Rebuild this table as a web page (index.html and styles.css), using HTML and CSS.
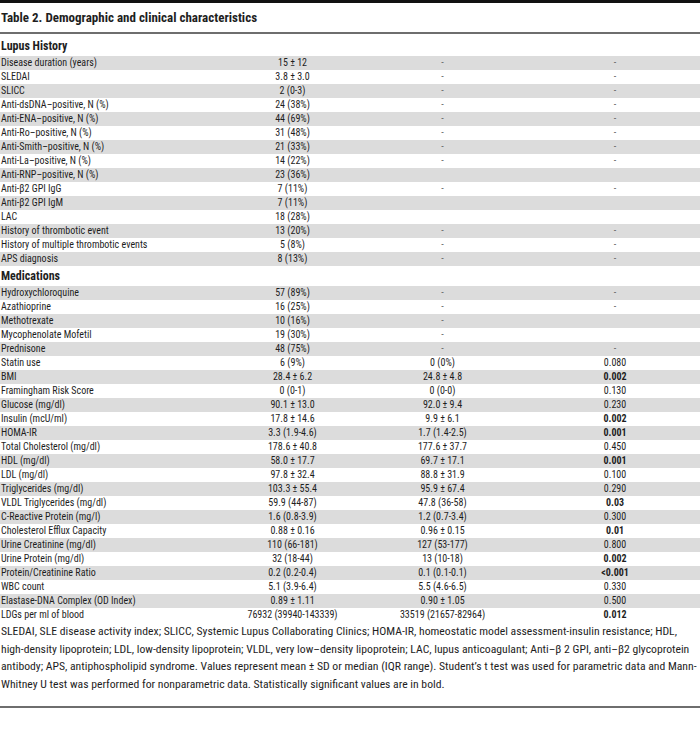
FILE: index.html
```html
<html>
<head>
<title>Table 2. Demographic and clinical characteristics</title>
<link rel="stylesheet" href="styles.css">
</head>
<body>
    <div class="caption">Table 2. Demographic and clinical characteristics</div>
    <table class="data">
        <colgroup>
            <col class="c-label">
            <col class="c-one">
            <col class="c-two">
            <col class="c-three">
        </colgroup>
        <tbody>
            <tr class="section"><th colspan="4">Lupus History</th></tr>
            <tr><td>Disease duration (years)</td><td>15 ± 12</td><td class="dash">-</td><td class="dash">-</td></tr>
            <tr><td>SLEDAI</td><td>3.8 ± 3.0</td><td class="dash">-</td><td class="dash">-</td></tr>
            <tr><td>SLICC</td><td>2 (0-3)</td><td class="dash">-</td><td class="dash">-</td></tr>
            <tr><td>Anti-dsDNA–positive, N (%)</td><td>24 (38%)</td><td class="dash">-</td><td class="dash">-</td></tr>
            <tr><td>Anti-ENA–positive, N (%)</td><td>44 (69%)</td><td class="dash">-</td><td class="dash">-</td></tr>
            <tr><td>Anti-Ro–positive, N (%)</td><td>31 (48%)</td><td class="dash">-</td><td class="dash">-</td></tr>
            <tr><td>Anti-Smith–positive, N (%)</td><td>21 (33%)</td><td class="dash">-</td><td class="dash">-</td></tr>
            <tr><td>Anti-La–positive, N (%)</td><td>14 (22%)</td><td class="dash">-</td><td class="dash">-</td></tr>
            <tr><td>Anti-RNP–positive, N (%)</td><td>23 (36%)</td><td></td><td></td></tr>
            <tr><td>Anti-β2 GPI IgG</td><td>7 (11%)</td><td class="dash">-</td><td class="dash">-</td></tr>
            <tr><td>Anti-β2 GPI IgM</td><td>7 (11%)</td><td></td><td></td></tr>
            <tr><td>LAC</td><td>18 (28%)</td><td></td><td></td></tr>
            <tr><td>History of thrombotic event</td><td>13 (20%)</td><td class="dash">-</td><td class="dash">-</td></tr>
            <tr><td>History of multiple thrombotic events</td><td>5 (8%)</td><td class="dash">-</td><td class="dash">-</td></tr>
            <tr><td>APS diagnosis</td><td>8 (13%)</td><td class="dash">-</td><td class="dash">-</td></tr>
        </tbody>
        <tbody>
            <tr class="section"><th colspan="4">Medications</th></tr>
            <tr><td>Hydroxychloroquine</td><td>57 (89%)</td><td class="dash">-</td><td class="dash">-</td></tr>
            <tr><td>Azathioprine</td><td>16 (25%)</td><td class="dash">-</td><td class="dash">-</td></tr>
            <tr><td>Methotrexate</td><td>10 (16%)</td><td class="dash">-</td><td></td></tr>
            <tr><td>Mycophenolate Mofetil</td><td>19 (30%)</td><td class="dash">-</td><td></td></tr>
            <tr><td>Prednisone</td><td>48 (75%)</td><td class="dash">-</td><td class="dash">-</td></tr>
            <tr><td>Statin use</td><td>6 (9%)</td><td>0 (0%)</td><td>0.080</td></tr>
            <tr><td>BMI</td><td>28.4 ± 6.2</td><td>24.8 ± 4.8</td><td class="sig">0.002</td></tr>
            <tr><td>Framingham Risk Score</td><td>0 (0-1)</td><td>0 (0-0)</td><td>0.130</td></tr>
            <tr><td>Glucose (mg/dl)</td><td>90.1 ± 13.0</td><td>92.0 ± 9.4</td><td>0.230</td></tr>
            <tr><td>Insulin (mcU/ml)</td><td>17.8 ± 14.6</td><td>9.9 ± 6.1</td><td class="sig">0.002</td></tr>
            <tr><td>HOMA-IR</td><td>3.3 (1.9-4.6)</td><td>1.7 (1.4-2.5)</td><td class="sig">0.001</td></tr>
            <tr><td>Total Cholesterol (mg/dl)</td><td>178.6 ± 40.8</td><td>177.6 ± 37.7</td><td>0.450</td></tr>
            <tr><td>HDL (mg/dl)</td><td>58.0 ± 17.7</td><td>69.7 ± 17.1</td><td class="sig">0.001</td></tr>
            <tr><td>LDL (mg/dl)</td><td>97.8 ± 32.4</td><td>88.8 ± 31.9</td><td>0.100</td></tr>
            <tr><td>Triglycerides (mg/dl)</td><td>103.3 ± 55.4</td><td>95.9 ± 67.4</td><td>0.290</td></tr>
            <tr><td>VLDL Triglycerides (mg/dl)</td><td>59.9 (44-87)</td><td>47.8 (36-58)</td><td class="sig">0.03</td></tr>
            <tr><td>C-Reactive Protein (mg/l)</td><td>1.6 (0.8-3.9)</td><td>1.2 (0.7-3.4)</td><td>0.300</td></tr>
            <tr><td>Cholesterol Efflux Capacity</td><td>0.88 ± 0.16</td><td>0.96 ± 0.15</td><td class="sig">0.01</td></tr>
            <tr><td>Urine Creatinine (mg/dl)</td><td>110 (66-181)</td><td>127 (53-177)</td><td>0.800</td></tr>
            <tr><td>Urine Protein (mg/dl)</td><td>32 (18-44)</td><td>13 (10-18)</td><td class="sig">0.002</td></tr>
            <tr><td>Protein/Creatinine Ratio</td><td>0.2 (0.2-0.4)</td><td>0.1 (0.1-0.1)</td><td class="sig">&lt;0.001</td></tr>
            <tr><td>WBC count</td><td>5.1 (3.9-6.4)</td><td>5.5 (4.6-6.5)</td><td>0.330</td></tr>
            <tr><td>Elastase-DNA Complex (OD Index)</td><td>0.89 ± 1.11</td><td>0.90 ± 1.05</td><td>0.500</td></tr>
            <tr><td>LDGs per ml of blood</td><td>76932 (39940-143339)</td><td>33519 (21657-82964)</td><td class="sig">0.012</td></tr>
        </tbody>
    </table>
    <p class="footnote">SLEDAI, SLE disease activity index; SLICC, Systemic Lupus Collaborating Clinics; HOMA-IR, homeostatic model assessment-insulin resistance; HDL, high-density lipoprotein; LDL, low-density lipoprotein; VLDL, very low–density lipoprotein; LAC, lupus anticoagulant; Anti–β 2 GPI, anti–β2 glycoprotein antibody; APS, antiphospholipid syndrome. Values represent mean ± SD or median (IQR range). Student’s t test was used for parametric data and Mann-Whitney U test was performed for nonparametric data. Statistically significant values are in bold.</p>
</body>
</html>
```

FILE: styles.css
```css
body {
    margin: 0;
    width: 700px;
    background: #fff;
    color: #1e1e1e;
    font-family: "Liberation Sans Narrow", "Roboto Condensed", Roboto, sans-serif;
}

.caption {
    border-top: 3px solid #111;
    border-bottom: 2px solid #6e6e6e;
    padding: 7px 1px 6px;
    font-size: 13px;
    line-height: 16px;
    font-weight: bold;
}

table.data {
    width: 700px;
    margin-top: 2px;
    border-collapse: collapse;
    table-layout: fixed;
    font-size: 10px;
}

.c-label { width: 230px; }
.c-one { width: 125px; }
.c-two { width: 175px; }
.c-three { width: 170px; }

table.data td {
    height: 14px;
    padding: 0;
    line-height: 14px;
    text-align: center;
    white-space: nowrap;
}

table.data td:first-child {
    text-align: left;
    padding-left: 1px;
}

/* first data row of each block is shaded */
table.data tbody tr:nth-child(even) {
    background: #dcdcdc;
}

.section th {
    text-align: left;
    padding: 3px 1px;
    line-height: 14px;
    font-size: 12px;
}

.dash { color: #666; }

.sig { font-weight: bold; }

.footnote {
    margin: 0;
    padding: 1px 1px 12px;
    font-size: 11.7px;
    line-height: 17.7px;
    border-bottom: 2px solid #6e6e6e;
}
```
